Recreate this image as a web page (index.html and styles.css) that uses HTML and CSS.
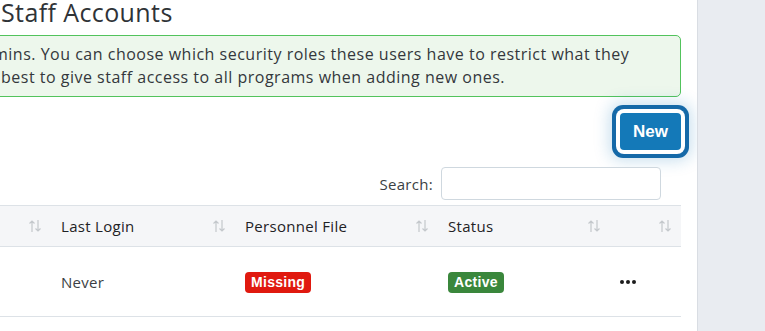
FILE: index.html
```html
<!DOCTYPE html>
<html lang="en">
<head>
    <meta charset="UTF-8">
    <meta name="viewport" content="width=device-width, initial-scale=1.0">
    <title>Staff Accounts</title>
    <link rel="stylesheet" href="styles.css">
</head>
<body>
    <div class="layout">
        <main class="content">
            <h1 class="page-title">Staff Accounts</h1>

            <div class="alert-success">
                <span class="alert-line first">mins. You can choose which security roles these users have to restrict what they</span>
                <span class="alert-line">best to give staff access to all programs when adding new ones.</span>
            </div>

            <div class="toolbar">
                <button class="btn-new">New</button>
            </div>

            <div class="table-filter">
                <label for="staffSearch">Search:</label>
                <input type="search" id="staffSearch" class="search-input">
            </div>

            <table class="staff-table">
                <colgroup>
                    <col class="col-name">
                    <col class="col-login">
                    <col class="col-file">
                    <col class="col-status">
                    <col class="col-actions">
                </colgroup>
                <thead>
                    <tr>
                        <th><div class="th-inner"><span>Email</span><svg class="sort-icon" viewBox="0 0 14 14"><path d="M4 13V2M1.5 4.5L4 2l2.5 2.5M10 1v11M7.5 9.5L10 12l2.5-2.5"/></svg></div></th>
                        <th><div class="th-inner"><span>Last Login</span><svg class="sort-icon" viewBox="0 0 14 14"><path d="M4 13V2M1.5 4.5L4 2l2.5 2.5M10 1v11M7.5 9.5L10 12l2.5-2.5"/></svg></div></th>
                        <th><div class="th-inner"><span>Personnel File</span><svg class="sort-icon" viewBox="0 0 14 14"><path d="M4 13V2M1.5 4.5L4 2l2.5 2.5M10 1v11M7.5 9.5L10 12l2.5-2.5"/></svg></div></th>
                        <th><div class="th-inner"><span>Status</span><svg class="sort-icon" viewBox="0 0 14 14"><path d="M4 13V2M1.5 4.5L4 2l2.5 2.5M10 1v11M7.5 9.5L10 12l2.5-2.5"/></svg></div></th>
                        <th><div class="th-inner"><span></span><svg class="sort-icon" viewBox="0 0 14 14"><path d="M4 13V2M1.5 4.5L4 2l2.5 2.5M10 1v11M7.5 9.5L10 12l2.5-2.5"/></svg></div></th>
                    </tr>
                </thead>
                <tbody>
                    <tr>
                        <td></td>
                        <td>Never</td>
                        <td><span class="badge badge-missing">Missing</span></td>
                        <td><span class="badge badge-active">Active</span></td>
                        <td><svg class="more-icon" viewBox="0 0 16 4"><circle cx="2" cy="2" r="2"/><circle cx="8" cy="2" r="2"/><circle cx="14" cy="2" r="2"/></svg></td>
                    </tr>
                </tbody>
            </table>
        </main>
        <aside class="sidebar"></aside>
    </div>
</body>
</html>
```

FILE: styles.css
```css
body {
    margin: 0;
    font-family: 'Open Sans', 'Noto Sans', sans-serif;
    color: #3b3f44;
    background: white;
    overflow: hidden;
}
.layout {
    display: flex;
    height: 331px;
}
.content {
    flex: 1;
    min-width: 0;
    padding-right: 16px;
}
.sidebar {
    width: 67px;
    flex-shrink: 0;
    background: #e9ecf1;
    border-left: 1px solid #d9dde3;
}
.page-title {
    margin: -4px 0 0 1px;
    font-size: 25px;
    font-weight: 400;
    line-height: 32px;
    color: #2f3337;
    letter-spacing: 0.4px;
}
.alert-success {
    margin: 7px 0 0 -20px;
    padding: 7px 12px;
    background: #edf7ec;
    border: 1px solid #52c35c;
    border-radius: 5px;
    font-size: 16px;
    line-height: 23px;
    letter-spacing: 0.5px;
    color: #34383c;
}
.alert-line {
    display: block;
    white-space: nowrap;
    padding-left: 8px;
}
.alert-line.first {
    padding-left: 0;
}
.toolbar {
    display: flex;
    justify-content: flex-end;
    margin-top: 16px;
}
.btn-new {
    width: 61px;
    height: 37px;
    background: #1479b8;
    color: white;
    border: none;
    border-radius: 4px;
    font-family: 'Liberation Sans', Arial, sans-serif;
    font-weight: bold;
    font-size: 17px;
    box-shadow: 0 0 0 4px white, 0 0 0 8px #1569a8, 0 0 16px 10px rgba(20, 121, 184, 0.25);
}
.table-filter {
    display: flex;
    justify-content: flex-end;
    align-items: center;
    gap: 8px;
    margin: 17px 20px 0 0;
    font-size: 15px;
    letter-spacing: 0.3px;
}
.search-input {
    box-sizing: border-box;
    width: 220px;
    height: 33px;
    margin: 0;
    border: 1px solid #cfd8df;
    border-radius: 4px;
    background: white;
}
.staff-table {
    margin: 5px 0 0 -60px;
    width: calc(100% + 60px);
    table-layout: fixed;
    border-collapse: collapse;
    font-size: 15px;
}
.col-name { width: 111px; }
.col-login { width: 184px; }
.col-file { width: 203px; }
.col-status { width: 172px; }
.col-actions { width: 71px; }
.staff-table th {
    height: 40px;
    padding: 0 9px 0 10px;
    background: #f5f6f8;
    border-top: 1px solid #dde2e7;
    border-bottom: 1px solid #dde2e7;
    text-align: left;
    font-weight: 500;
    color: #1f2225;
    letter-spacing: 0.3px;
}
.th-inner {
    display: flex;
    justify-content: space-between;
    align-items: center;
}
.sort-icon {
    width: 14px;
    height: 14px;
    fill: none;
    stroke: #c4c8cc;
    stroke-width: 1.2;
}
.staff-table td {
    height: 69px;
    padding: 0 9px 0 10px;
    border-bottom: 1px solid #dde2e7;
    letter-spacing: 0.3px;
}
.badge {
    display: inline-block;
    padding: 2px 6px;
    border-radius: 4px;
    color: white;
    font-family: 'Liberation Sans', Arial, sans-serif;
    font-weight: bold;
    font-size: 14px;
    line-height: 17px;
}
.badge-missing {
    background: #e0190f;
}
.badge-active {
    background: #3a873c;
}
.more-icon {
    display: block;
    width: 16px;
    height: 4px;
    fill: #1c1c1c;
}
```
